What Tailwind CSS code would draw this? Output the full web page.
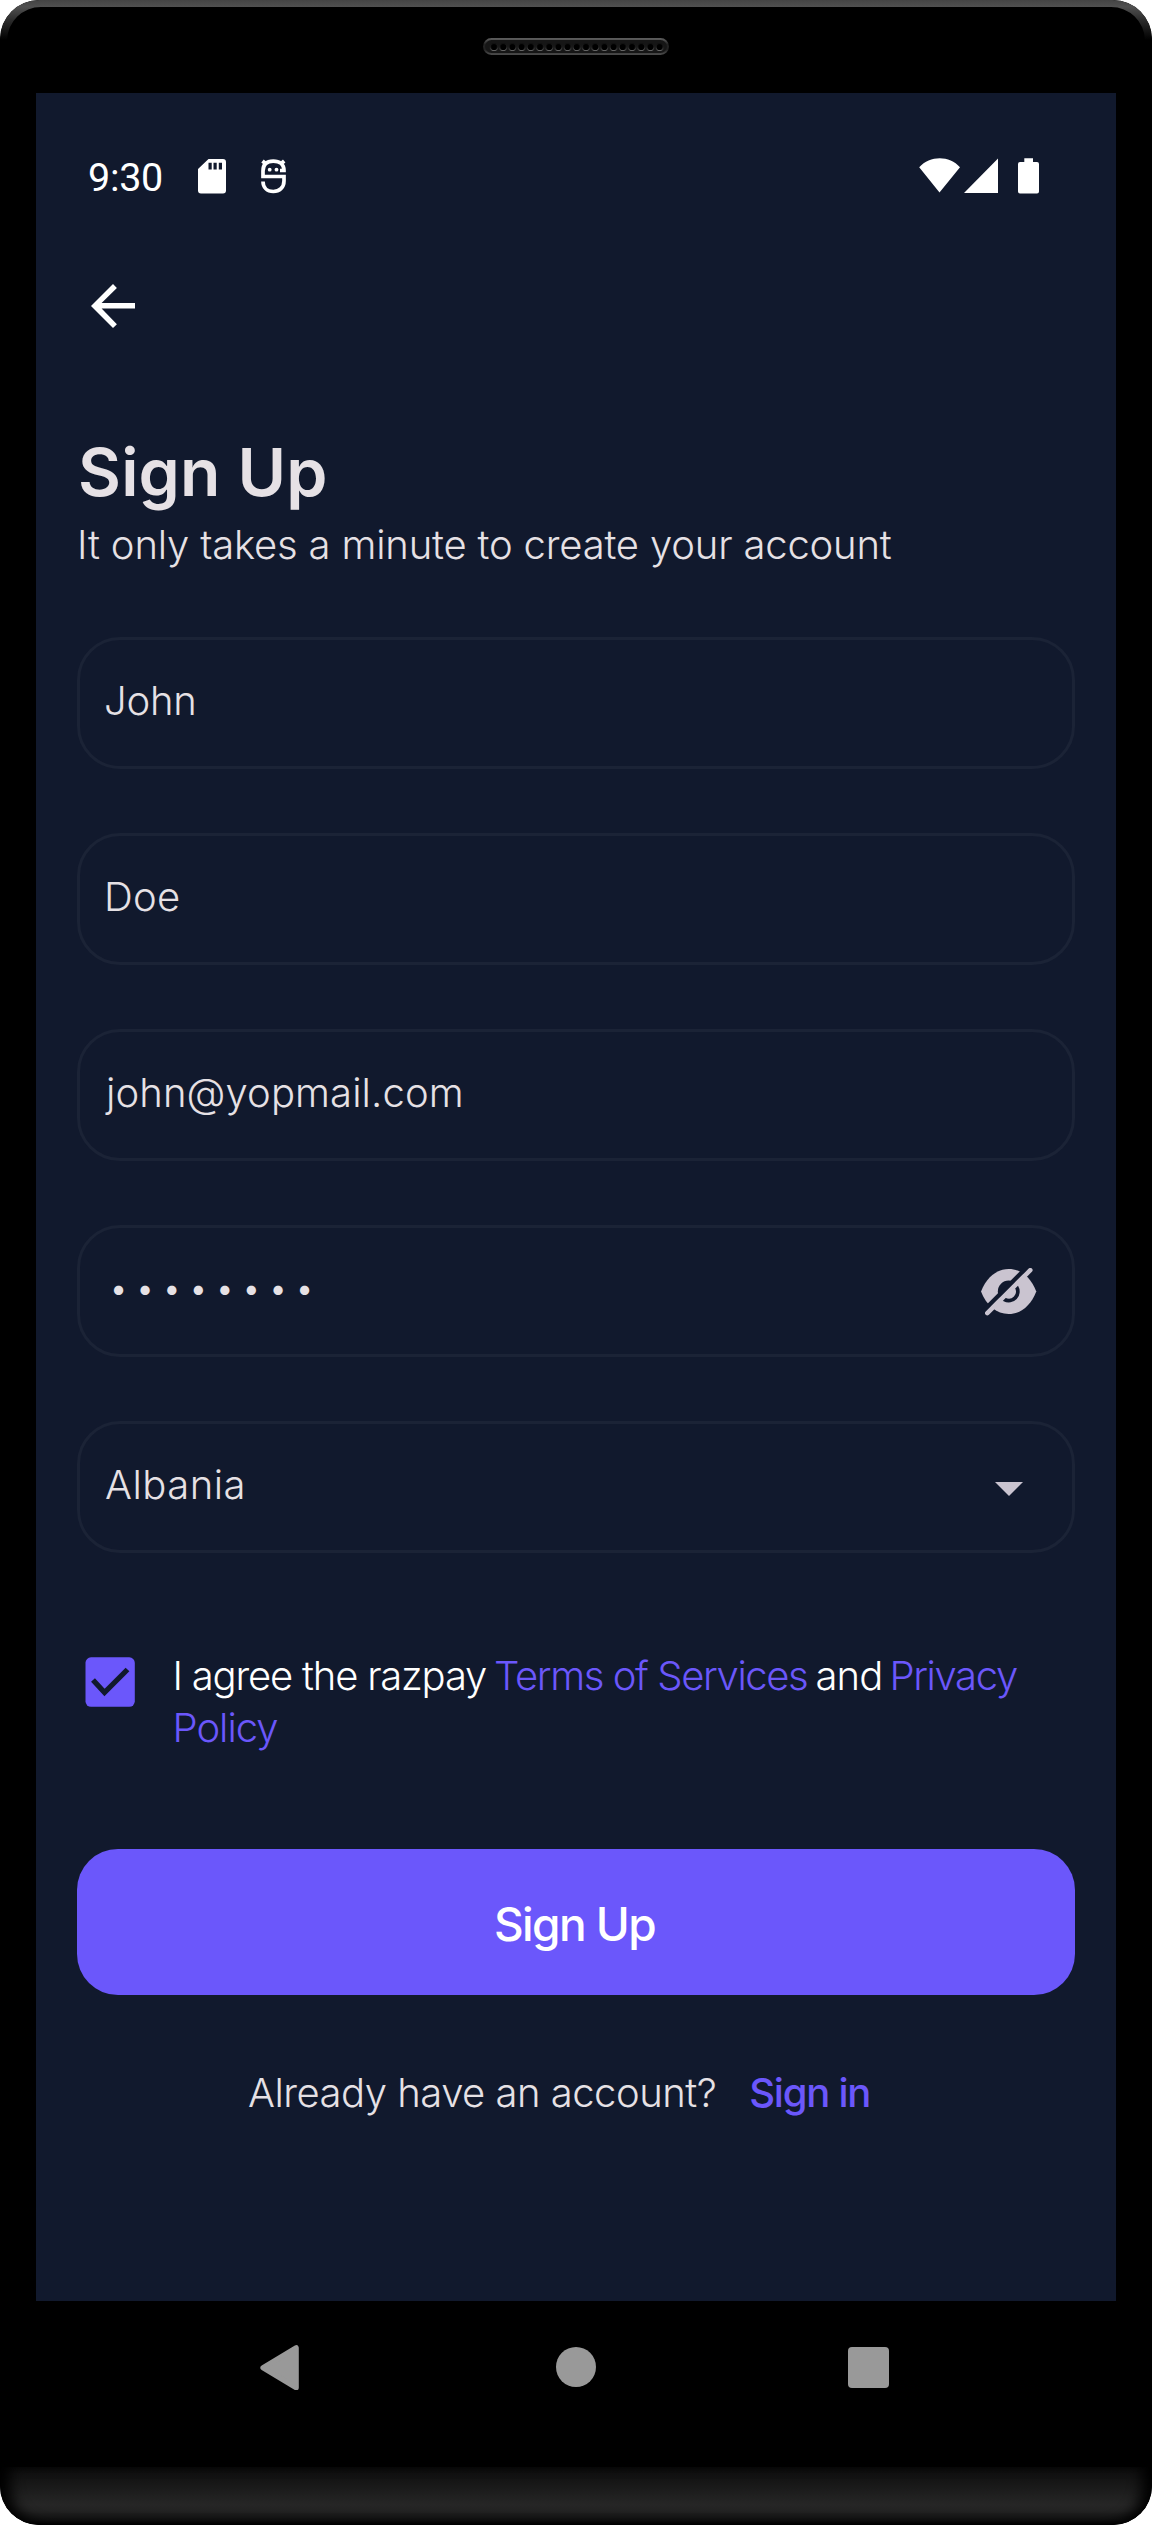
<!DOCTYPE html>
<html lang="en">
<head>
<meta charset="utf-8">
<title>Sign Up</title>
<script src="https://cdn.jsdelivr.net/npm/@tailwindcss/browser@4"></script>
</head>
<body class="bg-white">
<div class="relative flex h-[2525px] w-[1152px] flex-col overflow-hidden rounded-[39px] bg-black font-['Inter',sans-serif]">
  <!-- Device bezel highlight and speaker -->
  <svg class="absolute left-0 top-0 h-[50px] w-full" viewBox="0 0 1152 50">
    <defs>
      <linearGradient id="rim" x1="0" y1="0" x2="0" y2="1"><stop offset="0" stop-color="#444"/><stop offset=".17" stop-color="#505050"/><stop offset=".5" stop-color="#2c2c2c"/><stop offset="1" stop-color="#000"/></linearGradient>
    </defs>
    <path d="M0 40A39 39 0 0 1 39 0H1113A39 39 0 0 1 1152 40H1145A34 34 0 0 0 1111 7H41A34 34 0 0 0 7 40Z" fill="url(#rim)"/>
  </svg>
  <div class="flex h-[93px] shrink-0 justify-center pt-[38px]">
    <svg class="h-[17px] w-[186px]" viewBox="0 0 186 17">
      <defs>
        <linearGradient id="sp" x1="0" y1="0" x2="0" y2="1"><stop offset="0" stop-color="#5a5a5a"/><stop offset=".35" stop-color="#222"/><stop offset=".7" stop-color="#222"/><stop offset="1" stop-color="#484848"/></linearGradient>
        <linearGradient id="hole" x1="0" y1="0" x2="0" y2="1"><stop offset="0" stop-color="#111"/><stop offset=".5" stop-color="#222"/><stop offset="1" stop-color="#666"/></linearGradient>
        <pattern id="holes" x="6.4" y="0" width="9.2" height="17" patternUnits="userSpaceOnUse"><circle cx="4.6" cy="9" r="3.6" fill="#000" stroke="url(#hole)" stroke-width="1"/></pattern>
      </defs>
      <rect x="1" y="1" width="184" height="15" rx="7.5" fill="#161616" stroke="url(#sp)" stroke-width="2"/>
      <rect x="6.4" y="0" width="174.8" height="17" fill="url(#holes)"/>
    </svg>
  </div>

  <!-- App screen -->
  <main class="mx-9 flex h-[2208px] shrink-0 flex-col bg-[#11192d] px-[41px] pt-[65px] text-[40px] font-light text-[#e6e1e5]">
    <div class="flex h-9 items-start text-white">
      <span class="ml-[11px] mt-0.5 w-[109px] font-['Roboto',sans-serif] text-[39.5px] font-normal leading-9 tracking-[-0.3px]">9:30</span>
      <svg class="ml-[1px] mt-px h-[35px] w-[28px]" viewBox="0 0 28 35"><path fill="#fff" fill-rule="evenodd" d="M10.500 0H25a3 3 0 0 1 3 3V31.500a3 3 0 0 1-3 3H3a3 3 0 0 1-3-3V10ZM10.500 3.700V10.500H13.700V3.700ZM15.500 3.700V10.500H18.700V3.700ZM20.800 3.700V10.500H24V3.700Z"/></svg>
      <svg class="ml-[35px] mt-px h-[35px] w-[25px]" viewBox="0 0 25 35" fill="none" stroke="#fff" stroke-width="3.700"><path d="M19 11.500H23C23 5 18.500 2.200 12.300 2.200S2 5 2 12V17.500H23V22C23 28.500 18.500 32.500 12.300 32.500S2 28.500 2 22.500M1.500 2L5.500 5.500M23.200 2L19.200 5.500"/><circle cx="8.700" cy="10.700" r="1.900" fill="#fff" stroke="none"/><circle cx="15.500" cy="10.700" r="1.900" fill="#fff" stroke="none"/></svg>
      <svg class="ml-auto mr-[35px] h-9 w-[121px]" viewBox="0 0 121 36" fill="#fff"><path d="M0.200 9.300C11-2.700 30.500-2.700 41 9.300L20.500 34.500ZM45 35L79 0.500V35ZM105.300 0.200H114V4H118A2 2 0 0 1 120 6V33.500A2 2 0 0 1 118 35.500H101A2 2 0 0 1 99 33.500V6A2 2 0 0 1 101 4H105.300Z"/></svg>
    </div>
    <svg class="ml-[14px] mt-[90px] h-11 w-11 shrink-0" viewBox="0 0 44 44"><path d="M44 19v5.500H10.600l15.300 15.700L22 44 0 22 22 0l3.900 3.900L10.600 19Z" fill="#fff"/></svg>

    <h1 class="ml-px mt-[108px] text-[66px] font-semibold leading-[72px] tracking-[0.2px]">Sign Up</h1>
    <p class="mt-[12px] leading-[50px] tracking-[-0.18px]">It only takes a minute to create your account</p>

    <form class="mt-[67px] flex flex-col">
      <div class="flex flex-col gap-16">
        <div class="flex h-[132px] items-center rounded-[43px] border-[3px] border-[#1b2336] pb-[5px] pl-6"><span class="tracking-[-0.2px]">John</span></div>
        <div class="flex h-[132px] items-center rounded-[43px] border-[3px] border-[#1b2336] pb-[5px] pl-[24px]"><span class="tracking-[0.2px]">Doe</span></div>
        <div class="flex h-[132px] items-center rounded-[43px] border-[3px] border-[#1b2336] pb-[5px] pl-[26px]"><span class="tracking-[0.1px]">john@yopmail.com</span></div>
        <div class="flex h-[132px] items-center justify-between rounded-[43px] border-[3px] border-[#1b2336] pl-[29px] pr-[35px]">
          <span class="pb-2 text-[34px] tracking-[7.45px]">••••••••</span>
          <svg class="mt-0.5 h-[48px] w-[56px]" viewBox="0 0 56 48" fill="none">
            <path d="M0 23.500C5.500 9.500 15.500 1 27.700 1S49.800 9.500 55.300 23.500C49.800 37.500 39.900 46 27.700 46S5.500 37.500 0 23.500Z" fill="#cac4d0"/>
            <path d="M20 31.200A10.800 10.800 0 0 1 35.400 15.800Z" fill="#11192d"/>
            <path d="M35.400 18.800A9 9 0 0 1 23.500 31.500" stroke="#11192d" stroke-width="3.800" stroke-linecap="round"/>
            <path d="M0 45.400L45.400 0" stroke="#11192d" stroke-width="4.400"/>
            <path d="M6.300 45.200L49.300 2.200" stroke="#cac4d0" stroke-width="4.500" stroke-linecap="round"/>
          </svg>
        </div>
        <div class="flex h-[132px] items-center justify-between rounded-[43px] border-[3px] border-[#1b2336] pl-[25px] pr-[49px]">
          <span class="pb-[5px] tracking-[0.5px]">Albania</span>
          <svg class="mt-[3px] h-[14px] w-[28px]" viewBox="0 0 28 14"><path d="M0 0H28L14 14Z" fill="#cac4d0"/></svg>
        </div>
      </div>

      <div class="mt-24 flex items-start">
        <svg class="ml-[8px] mt-2 h-[50px] w-[50px] shrink-0" viewBox="0 0 50 50"><rect x=".5" y=".3" width="49.300" height="49.500" rx="5.500" fill="#6b57fb"/><path d="M8 23L19.500 35.500L42.500 12.500" fill="none" stroke="#11192d" stroke-width="5.300"/></svg>
        <p class="ml-[37.5px] mt-px whitespace-nowrap leading-[52px] tracking-[-1.2px] text-white">I agree the razpay <a class="-ml-[2px] tracking-[-1.4px] text-[#6b57fb]">Terms of Services</a> <span class="-ml-[2px] tracking-[-0.9px]">and</span> <a class="-ml-[3px] tracking-[-1.35px] text-[#6b57fb]">Privacy<br><span class="tracking-[-1px]">Policy</span></a></p>
      </div>

      <button type="button" class="mt-[95px] h-[146px] rounded-[41px] bg-[#6b57fb] pr-[3px] pt-[4px] text-[46px] font-medium tracking-[-1.6px] text-white">Sign Up</button>
    </form>

    <p class="mt-[72px] flex pl-[171px] leading-[52px]"><span class="tracking-[-0.5px]">Already have an account?</span><a class="ml-[33px] font-medium tracking-[-1.25px] text-[#6b57fb]">Sign in</a></p>
  </main>

  <!-- System navigation -->
  <nav class="flex h-[166px] shrink-0 items-start pt-[44px]">
    <svg class="ml-[260px] h-[45px] w-[39px]" viewBox="0 0 39 45"><path d="M3 22.700L36.200 2.800V42.700Z" fill="#999" stroke="#999" stroke-width="5.200" stroke-linejoin="round"/></svg>
    <div class="ml-[257px] mt-[2px] h-10 w-10 rounded-full bg-[#999]"></div>
    <div class="ml-[252px] mt-[2px] h-[41px] w-[41px] rounded-[4px] bg-[#999]"></div>
  </nav>
  <div class="h-[58px] shrink-0 rounded-b-[39px] bg-[linear-gradient(180deg,#0e0e0e_0%,#181818_30%,#262626_65%,#222_76%,#111_92%,#000_100%)] shadow-[inset_14px_0_14px_-4px_#000,inset_-14px_0_14px_-4px_#000]"></div>
</div>
</body>
</html>
